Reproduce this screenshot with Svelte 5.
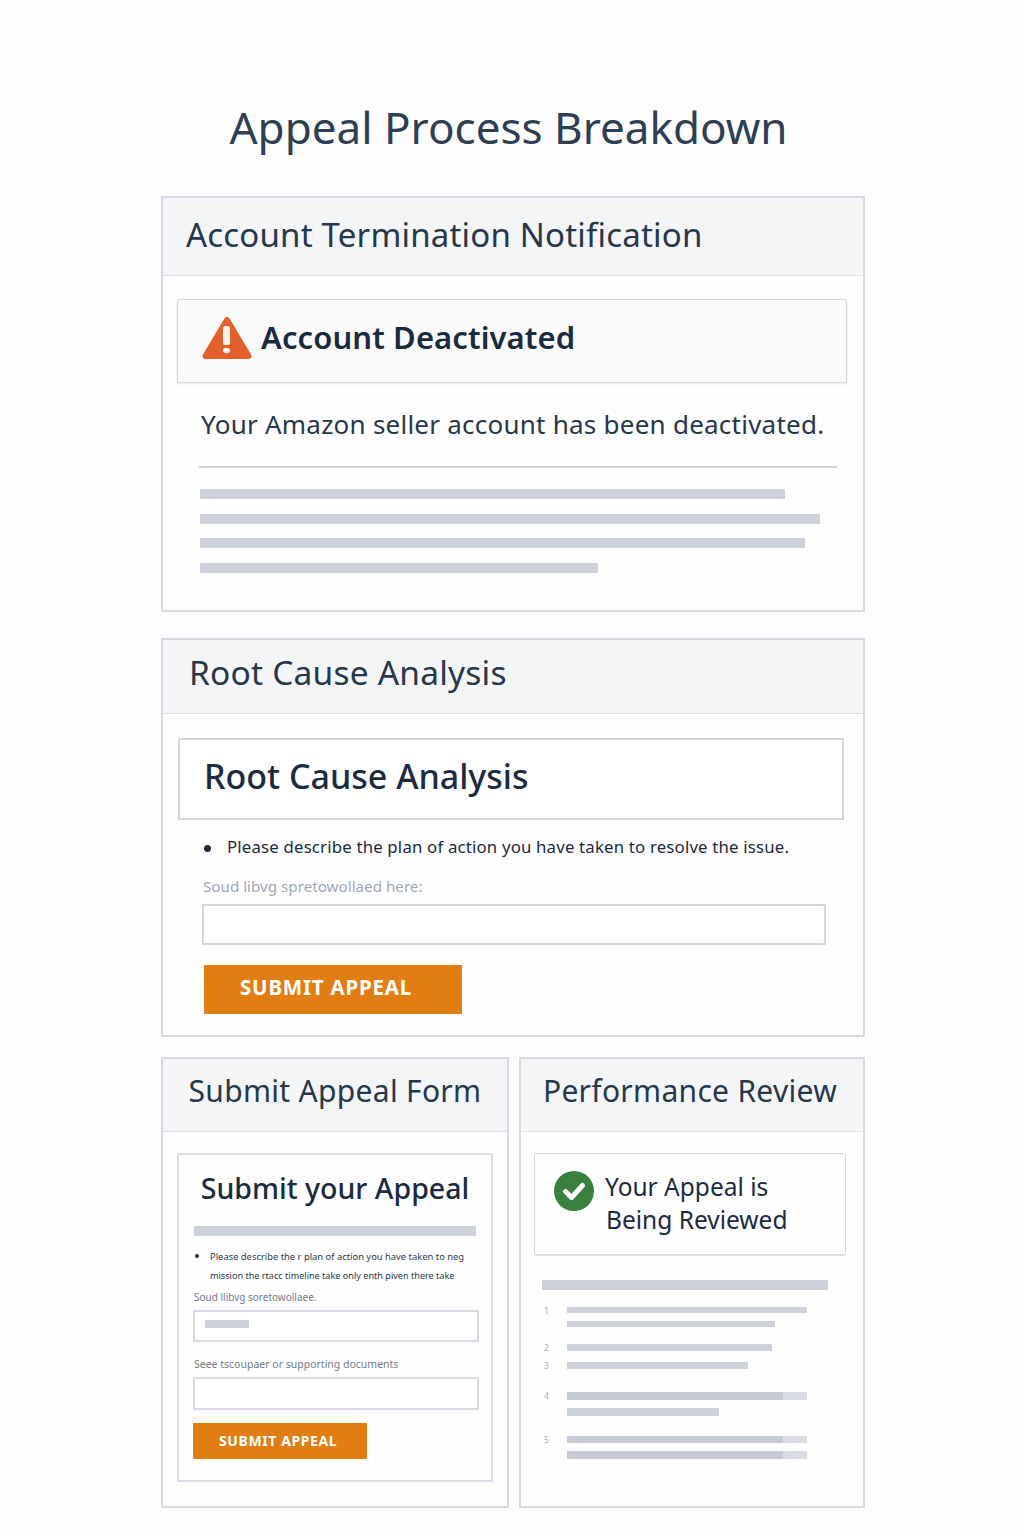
<script lang="ts">
	const alertLines = [585, 620, 605, 398];
	const reviewSteps = [
		{ n: '1', gap: 17, bars: [{ w: 240, h: 6 }, { w: 208, h: 6 }] },
		{ n: '2', gap: 17, bars: [{ w: 205, h: 7 }] },
		{ n: '3', gap: 8, bars: [{ w: 181, h: 7 }] },
		{ n: '4', gap: 20, bars: [{ w: 240, h: 8, fade: true }, { w: 152, h: 8 }] },
		{ n: '5', gap: 20, bars: [{ w: 240, h: 7, fade: true }, { w: 240, h: 8, fade: true }] }
	];
</script>

<main class="page">
	<h1 class="page-title">Appeal Process Breakdown</h1>

	<div class="stack">
		<section class="panel panel-notice">
			<header class="panel-head head-notice"><h2>Account Termination Notification</h2></header>
			<div class="notice-body">
				<div class="alert-box">
					<svg class="warn-icon" viewBox="0 0 50 44" width="50" height="44" aria-hidden="true">
						<path d="M25 4 L46.5 40 L3.5 40 Z" fill="#e3602c" stroke="#e3602c" stroke-width="6" stroke-linejoin="round" />
						<rect x="21" y="10" width="7" height="19" rx="2.6" fill="#fdf4ee" />
						<ellipse cx="24.5" cy="34.5" rx="3.6" ry="2.7" fill="#fdf4ee" />
					</svg>
					<h3>Account Deactivated</h3>
				</div>
				<p class="notice-text">Your Amazon seller account has been deactivated.</p>
				<hr class="notice-rule" />
				<div class="alert-lines">
					{#each alertLines as w}
						<div class="bar" style:width="{w}px"></div>
					{/each}
				</div>
			</div>
		</section>

		<section class="panel panel-root">
			<header class="panel-head head-root"><h2>Root Cause Analysis</h2></header>
			<div class="root-body">
				<div class="root-title"><h3>Root Cause Analysis</h3></div>
				<ul class="root-list">
					<li>Please describe the plan of action you have taken to resolve the issue.</li>
				</ul>
				<div class="root-label">Soud libvg spretowollaed here:</div>
				<div class="root-input"></div>
				<button class="btn btn-large" type="button">SUBMIT APPEAL</button>
			</div>
		</section>

		<div class="columns">
			<section class="panel panel-form">
				<header class="panel-head head-small"><h2>Submit Appeal Form</h2></header>
				<div class="small-body">
					<div class="form-card">
						<h3>Submit your Appeal</h3>
						<div class="bar form-bar"></div>
						<ul class="form-list">
							<li>Please describe the r plan of action you have taken to neg</li>
							<li class="cont">mission the rtacc timeline take only enth piven there take</li>
						</ul>
						<div class="form-label first">Soud llibvg soretowollaee.</div>
						<div class="form-input input-a"><div class="bar stub"></div></div>
						<div class="form-label second">Seee tscoupaer or supporting documents</div>
						<div class="form-input input-b"></div>
						<button class="btn btn-small" type="button">SUBMIT APPEAL</button>
					</div>
				</div>
			</section>

			<section class="panel panel-review">
				<header class="panel-head head-small head-shift"><h2>Performance Review</h2></header>
				<div class="small-body review-body">
					<div class="review-card">
						<svg class="check-icon" viewBox="0 0 40 40" width="40" height="40" aria-hidden="true">
							<circle cx="20" cy="20" r="20" fill="#39803f" />
							<path d="M11.5 20.5 L17.5 26.5 L28.5 14.5" fill="none" stroke="#fff" stroke-width="5" stroke-linejoin="round" stroke-linecap="round" />
						</svg>
						<h3>Your Appeal is<br /><span class="indent">Being Reviewed</span></h3>
					</div>
					<div class="bar review-bar"></div>
					<div class="steps">
						{#each reviewSteps as step}
							<div class="step" style:margin-top="{step.gap}px">
								<span class="step-n">{step.n}</span>
								<div class="step-bars">
									{#each step.bars as b}
										<div class="bar" class:fade={b.fade} style:width="{b.w}px" style:height="{b.h}px"></div>
									{/each}
								</div>
							</div>
						{/each}
					</div>
				</div>
			</section>
		</div>
	</div>
</main>

<style>
	:global(body) {
		margin: 0;
		background: #fdfdfe;
		font-family: 'Noto Sans', 'Open Sans', sans-serif;
		color: #1c2b40;
	}

	h1, h2, h3, p, ul {
		margin: 0;
		padding: 0;
	}

	.page {
		width: 1024px;
		height: 1536px;
		box-sizing: border-box;
		padding-top: 97px;
		overflow: hidden;
	}

	.page-title {
		width: 1017px;
		text-align: center;
		font-size: 44px;
		line-height: 60px;
		font-weight: 400;
		color: #2e3f54;
	}

	.stack {
		width: 704px;
		margin: 39px 0 0 161px;
		display: flex;
		flex-direction: column;
	}

	.panel {
		box-sizing: border-box;
		border: 2px solid #d6d9e3;
		background: #fefefe;
	}

	.panel-head {
		box-sizing: border-box;
		display: flex;
		align-items: center;
		background: #f4f5f6;
		border-bottom: 1px solid #dfe1e7;
	}

	.panel-head h2 {
		font-weight: 400;
		white-space: nowrap;
		color: #26374c;
	}

	.panel-notice {
		height: 416px;
	}

	.head-notice {
		height: 78px;
		padding: 0 0 5px 23px;
	}

	.head-notice h2 {
		font-size: 33px;
		letter-spacing: 0.19px;
	}

	.notice-body {
		padding: 23px 16px 0 14px;
	}

	.alert-box {
		box-sizing: border-box;
		width: 670px;
		height: 84px;
		display: flex;
		align-items: center;
		padding-left: 24px;
		gap: 9px;
		background: #fafafa;
		border: 1px solid #d3d6de;
		border-radius: 2px;
		box-shadow: 0 1px 2px rgba(90, 100, 120, 0.15);
	}

	.warn-icon {
		flex: none;
		margin-top: -6px;
	}

	.alert-box h3 {
		margin-bottom: 8px;
		font-size: 31px;
		font-weight: 600;
		letter-spacing: 0.1px;
		color: #1a2a40;
	}

	.notice-text {
		margin: 23px 0 0 24px;
		font-size: 26px;
		letter-spacing: 0.24px;
		line-height: 36px;
		white-space: nowrap;
		color: #26374c;
	}

	.notice-rule {
		width: 638px;
		height: 2px;
		margin: 24px 0 0 22px;
		border: 0;
		background: #ccd0da;
	}

	.alert-lines {
		margin: 21px 0 0 23px;
		display: flex;
		flex-direction: column;
		gap: 14.5px;
	}

	.bar {
		height: 10px;
		background: #cdd1da;
	}

	.panel-root {
		height: 399px;
		margin-top: 26px;
	}

	.head-root {
		height: 74px;
		padding: 0 0 9px 26px;
	}

	.head-root h2 {
		font-size: 33.5px;
		letter-spacing: 0.2px;
	}

	.root-body {
		padding: 24px 0 0 15px;
	}

	.root-title {
		box-sizing: border-box;
		width: 666px;
		height: 82px;
		display: flex;
		align-items: center;
		padding: 0 0 6px 24px;
		background: #fff;
		border: 2px solid #d3d6e0;
	}

	.root-title h3 {
		font-size: 34px;
		font-weight: 500;
		color: #1c2b40;
	}

	.root-list {
		list-style: none;
		margin: 15px 0 0 26px;
	}

	.root-list li {
		position: relative;
		padding-left: 23px;
		font-size: 16.8px;
		letter-spacing: 0.18px;
		line-height: 24px;
		white-space: nowrap;
		color: #1c2b40;
	}

	.root-list li::before {
		content: '';
		position: absolute;
		left: 0;
		top: 10px;
		width: 7px;
		height: 7px;
		border-radius: 50%;
		background: #1c2b40;
	}

	.root-label {
		margin: 17px 0 0 25px;
		font-size: 15.2px;
		line-height: 20px;
		color: #a0a7b6;
	}

	.root-input {
		box-sizing: border-box;
		width: 624px;
		height: 41px;
		margin: 8px 0 0 24px;
		background: #fff;
		border: 2px solid #d3d6e2;
	}

	.btn {
		display: block;
		box-sizing: border-box;
		border: 0;
		border-radius: 1px;
		background: #e07e14;
		color: #fff;
		font-family: inherit;
		font-weight: 700;
		text-align: left;
		white-space: nowrap;
	}

	.btn-large {
		width: 258px;
		height: 49px;
		margin: 20px 0 0 26px;
		padding: 0 0 5px 36px;
		font-size: 20.5px;
		letter-spacing: 0.8px;
	}

	.columns {
		display: grid;
		grid-template-columns: 348px 346px;
		gap: 10px;
		margin-top: 20px;
	}

	.panel-form,
	.panel-review {
		height: 451px;
	}

	.head-small {
		height: 73px;
		justify-content: center;
		padding-bottom: 10px;
	}

	.head-small h2 {
		font-size: 30px;
		letter-spacing: 0.3px;
	}

	.head-shift {
		padding-right: 4px;
	}

	.small-body {
		padding: 21px 14px 0;
	}

	.form-card {
		box-sizing: border-box;
		width: 316px;
		height: 329px;
		padding: 0 13px 0 15px;
		border: 2px solid #dcdfe7;
		background: #fefefe;
	}

	.form-card h3 {
		margin-top: 13px;
		padding-right: 2px;
		font-size: 28.5px;
		line-height: 40px;
		font-weight: 500;
		text-align: center;
		white-space: nowrap;
		color: #1a2a40;
	}

	.form-bar {
		width: 282px;
		margin-top: 18px;
	}

	.form-list {
		list-style: none;
		margin-top: 11px;
	}

	.form-list li {
		position: relative;
		padding-left: 16px;
		font-size: 9.4px;
		line-height: 19px;
		white-space: nowrap;
		color: #2b3a4e;
	}

	.form-list li.cont {
		font-size: 9.1px;
	}

	.form-list li:first-child::before {
		content: '';
		position: absolute;
		left: 1px;
		top: 7px;
		width: 4px;
		height: 4px;
		border-radius: 50%;
		background: #1c2b40;
	}

	.form-label {
		font-size: 10px;
		line-height: 14px;
		white-space: nowrap;
		color: #737c8c;
	}

	.form-label.first {
		margin-top: 5px;
	}

	.form-label.second {
		margin-top: 15px;
		font-size: 10.5px;
	}

	.form-input {
		box-sizing: border-box;
		width: 286px;
		background: #fff;
		border: 2px solid #d8dbe5;
		margin-left: -1px;
	}

	.input-a {
		height: 32px;
		margin-top: 6px;
		padding: 8px 0 0 10px;
	}

	.input-b {
		height: 33px;
		margin-top: 6px;
	}

	.stub {
		width: 44px;
		height: 8px;
	}

	.btn-small {
		width: 174px;
		height: 36px;
		margin: 13px 0 0 -1px;
		padding: 0 0 2px 26px;
		font-size: 14px;
		letter-spacing: 0.6px;
	}

	.review-body {
		padding: 21px 0 0 13px;
	}

	.review-card {
		box-sizing: border-box;
		width: 312px;
		height: 102px;
		display: flex;
		padding: 17px 0 0 19px;
		gap: 11px;
		background: #fefefe;
		border: 1px solid #d6d9e2;
		border-radius: 2px;
		box-shadow: 0 1px 1px rgba(90, 100, 120, 0.2);
	}

	.check-icon {
		flex: none;
	}

	.review-card h3 {
		margin-top: -1px;
		font-size: 24.5px;
		line-height: 33px;
		font-weight: 400;
		white-space: nowrap;
		color: #1c2b40;
	}

	.indent {
		margin-left: 1px;
	}

	.review-bar {
		width: 286px;
		margin: 25px 0 0 8px;
	}

	.steps {
		margin: 0 0 0 10px;
	}

	.step {
		display: flex;
	}

	.step-n {
		flex: none;
		width: 23px;
		margin-top: -2px;
		font-size: 8.5px;
		line-height: 12px;
		color: #a8aebb;
	}

	.step-bars {
		display: flex;
		flex-direction: column;
		gap: 8px;
	}

	.step-bars .fade {
		background: linear-gradient(to right, #c6cad4 90%, #d9dce3 90%);
	}
</style>
